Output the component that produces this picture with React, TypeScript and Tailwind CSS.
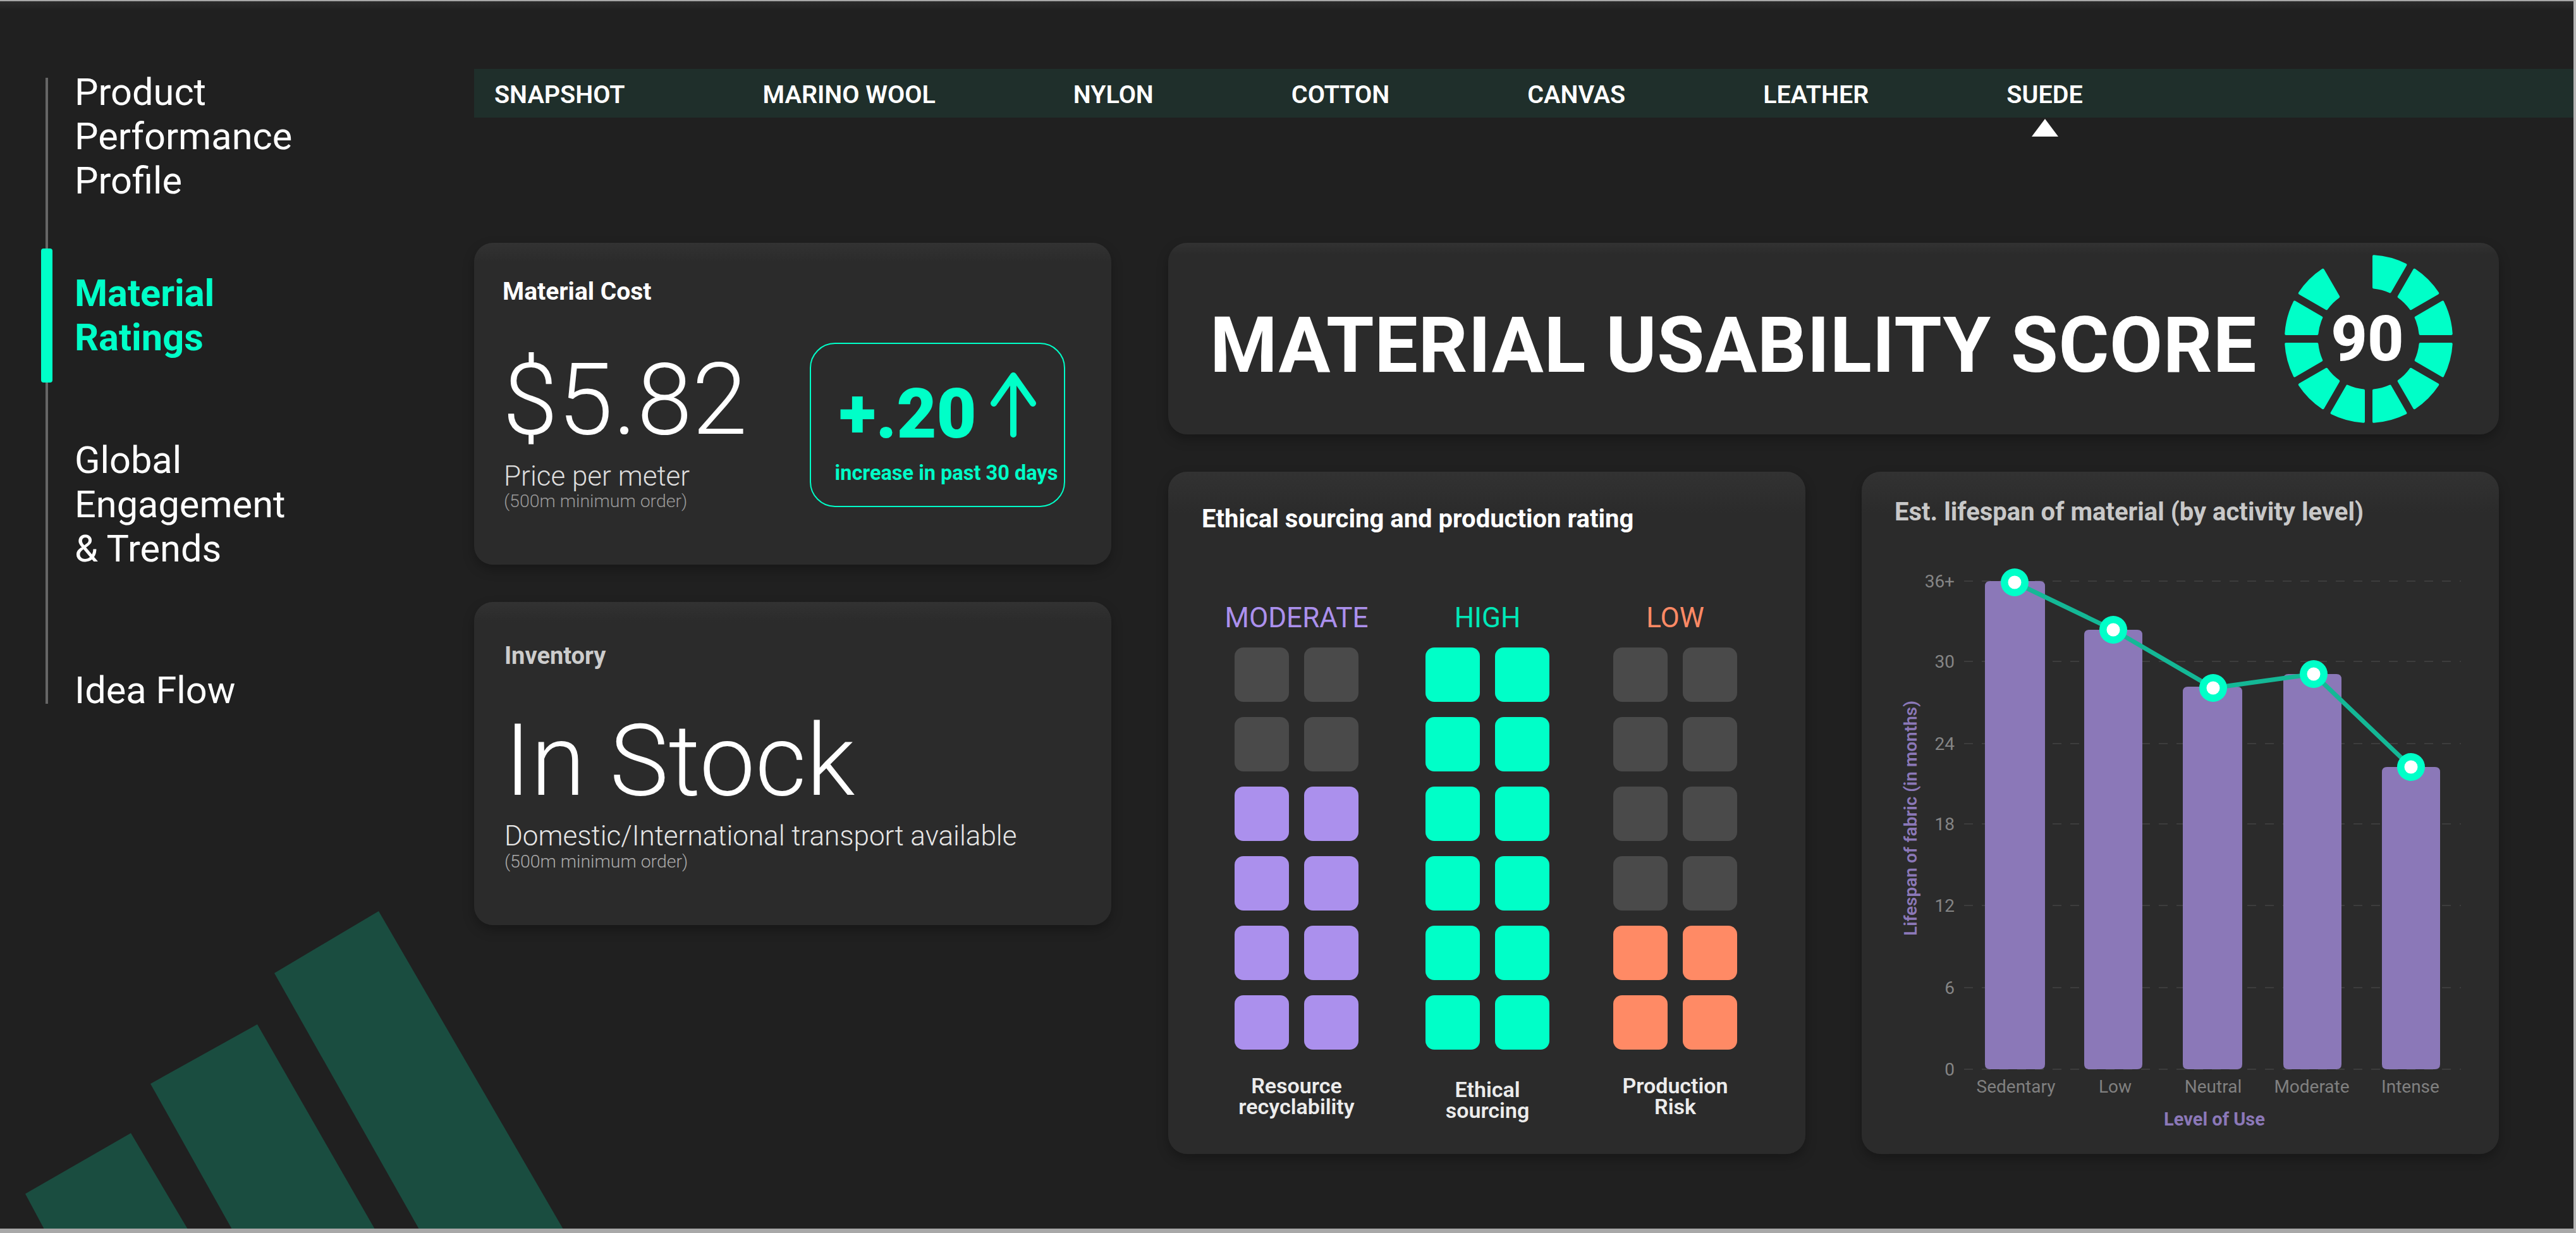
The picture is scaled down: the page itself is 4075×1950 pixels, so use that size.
import React from 'react';

const GREEN = '#00ffc8';

const ringSegments = () => {
  const cx = 140;
  const cy = 140;
  const ro = 131;
  const ri = 82;
  const gap = 8;
  const pt = (r: number, deg: number) => {
    const a = ((deg - 90) * Math.PI) / 180;
    return `${(cx + r * Math.cos(a)).toFixed(2)} ${(cy + r * Math.sin(a)).toFixed(2)}`;
  };
  const out: string[] = [];
  // last slot (11 to 12 o'clock) stays empty, score is 90
  for (let i = 0; i < 11; i++) {
    const a0 = i * 30;
    const a1 = a0 + 30;
    const oo = (Math.asin(gap / ro) * 180) / Math.PI;
    const oi = (Math.asin(gap / ri) * 180) / Math.PI;
    out.push(
      `M${pt(ro, a0 + oo)} A${ro} ${ro} 0 0 1 ${pt(ro, a1 - oo)} L${pt(ri, a1 - oi)} A${ri} ${ri} 0 0 0 ${pt(ri, a0 + oi)} Z`
    );
  }
  return out;
};

const Card: React.FC<{ className?: string; children: React.ReactNode }> = ({ className, children }) => (
  <div className={`rounded-[30px] bg-gradient-to-b from-[#323232] from-0% to-[#2b2b2b] to-[6%] shadow-[0_8px_18px_rgba(0,0,0,0.28)] ${className ?? ''}`}>
    {children}
  </div>
);

const RatingColumn: React.FC<{
  heading: string;
  headingClass: string;
  onClass: string;
  filled: number;
  label: string[];
  labelClass?: string;
  className?: string;
}> = ({ heading, headingClass, onClass, filled, label, labelClass, className }) => (
  <div className={`flex flex-col items-center w-[196px] ${className ?? ''}`}>
    <div className={`h-[52px] leading-[52px] text-[44px] whitespace-nowrap ${headingClass}`}>{heading}</div>
    <div className="mt-[21px] grid grid-cols-2 gap-x-[24px] gap-y-[24px]">
      {Array.from({ length: 12 }).map((_, i) => (
        <div key={i} className={`w-[86px] h-[86px] rounded-[14px] ${12 - i <= filled ? onClass : 'bg-[#4a4a4a]'}`} />
      ))}
    </div>
    <div className={`text-[34px] leading-[33px] font-semibold text-[#ececec] text-center whitespace-nowrap ${labelClass ?? 'mt-[41px]'}`}>
      {label.map((l) => (
        <div key={l}>{l}</div>
      ))}
    </div>
  </div>
);

const TICKS = [
  { y: 919, t: '36+' },
  { y: 1046, t: '30' },
  { y: 1176, t: '24' },
  { y: 1303, t: '18' },
  { y: 1432, t: '12' },
  { y: 1562, t: '6' },
  { y: 1691, t: '0' },
];

const BARS = [
  { x: 3139, w: 95, top: 919, px: 3186, py: 921, name: 'Sedentary', lx: 3188 },
  { x: 3296, w: 92, top: 996, px: 3342, py: 996, name: 'Low', lx: 3345 },
  { x: 3452, w: 94, top: 1086, px: 3500, py: 1088, name: 'Neutral', lx: 3500 },
  { x: 3611, w: 92, top: 1066, px: 3659, py: 1066, name: 'Moderate', lx: 3656 },
  { x: 3767, w: 92, top: 1213, px: 3813, py: 1213, name: 'Intense', lx: 3812 },
];

const LifespanChart = () => (
  <svg viewBox="2944 860 1008 965" className="w-[1008px] h-[965px]" fontFamily="Roboto, sans-serif">
    {TICKS.map((t) => (
      <g key={t.t}>
        <line x1="3106" x2="3892" y1={t.y} y2={t.y} stroke="#3d3d3d" strokeWidth="2" strokeDasharray="14 14" />
        <text x="3091" y={t.y + 10} textAnchor="end" fontSize="28" fill="#858585">
          {t.t}
        </text>
      </g>
    ))}
    {BARS.map((b) => (
      <g key={b.name}>
        <path
          d={`M${b.x} ${b.top + 8} q0 -8 8 -8 H${b.x + b.w - 8} q8 0 8 8 V1683 q0 8 -8 8 H${b.x + 8} q-8 0 -8 -8 Z`}
          fill="#8b78b8"
        />
        <text x={b.lx} y="1728" textAnchor="middle" fontSize="28" fill="#808080">
          {b.name}
        </text>
      </g>
    ))}
    <polyline points={BARS.map((b) => `${b.px},${b.py}`).join(' ')} fill="none" stroke="#14b896" strokeWidth="7" />
    {BARS.map((b) => (
      <g key={b.px}>
        <circle cx={b.px} cy={b.py} r="22" fill={GREEN} />
        <circle cx={b.px} cy={b.py} r="10.5" fill="#fff" />
      </g>
    ))}
    <text x="3502" y="1780" textAnchor="middle" fontSize="29" fontWeight="700" fill="#8b78b8">
      Level of Use
    </text>
    <text
      transform="translate(3031 1294) rotate(-90)"
      textAnchor="middle"
      fontSize="28"
      fontWeight="600"
      fill="#8b78b8"
    >
      Lifespan of fabric (in months)
    </text>
  </svg>
);

export default function App() {
  return (
    <div className="relative w-[4075px] h-[1950px] overflow-hidden bg-[#202020] border-t-[2px] border-t-[#a8a8a8] border-r-[4px] border-r-[#b5b5b5] border-b-[7px] border-b-[#a8a8a8] flex font-['Roboto',sans-serif] text-white">
      <div className="absolute left-0 top-0 w-full h-[14px] bg-gradient-to-b from-[#2c2c2c] to-transparent" />
      {/* logo in the corner */}
      <svg className="absolute left-0 top-[-2px] w-[4075px] h-[1950px]" viewBox="0 0 4075 1950">
        <polygon points="599,1441 434,1539 663,1944 891,1944" fill="#1a4d40" />
        <polygon points="407,1620 238,1714 367,1944 593,1944" fill="#1a4d40" />
        <polygon points="207,1792 40,1888 70,1944 297,1944" fill="#1a4d40" />
      </svg>

      {/* side nav */}
      <div className="relative w-[750px] shrink-0 pt-[121px] pl-[72px]">
        <div className="flow-root border-l-[4px] border-l-[#666666] h-[990px] pl-[42px] text-[59.5px] leading-[70px]">
          <div className="-mt-[12px]">
            Product
            <br />
            Performance
            <br />
            Profile
          </div>
          <div className="relative mt-[108px] font-bold text-[#00ffc8]">
            <div className="absolute left-[-53px] top-[-36px] w-[18px] h-[212px] rounded-[4px] bg-[#00ffc8]" />
            Material
            <br />
            Ratings
          </div>
          <div className="mt-[124px]">
            Global
            <br />
            Engagement
            <br />
            &amp; Trends
          </div>
          <div className="mt-[154px]">Idea Flow</div>
        </div>
      </div>

      {/* main area */}
      <div className="flex-1 pt-[107px] flex flex-col">
        <div className="h-[77px] bg-[#1f2f2b] flex items-center gap-[218px] pl-[32px] pt-[4px] text-[39.5px] font-semibold whitespace-nowrap">
          <span>SNAPSHOT</span>
          <span>MARINO WOOL</span>
          <span>NYLON</span>
          <span>COTTON</span>
          <span>CANVAS</span>
          <span>LEATHER</span>
          <span className="relative">
            SUEDE
            <span className="absolute left-1/2 -translate-x-1/2 top-[68px] w-0 h-0 border-l-[21px] border-r-[21px] border-b-[28px] border-l-transparent border-r-transparent border-b-white" />
          </span>
        </div>

        <div className="mt-[198px] flex gap-[90px]">
          {/* left column */}
          <div className="w-[1008px] flex flex-col gap-[59px]">
            <Card className="h-[509px] pt-[55px] px-[45px]">
              <div className="text-[39px] font-bold leading-[44px]">Material Cost</div>
              <div className="flex mt-[59px]">
                <div className="w-[486px] pl-[2px] font-light">
                  <div className="text-[157.5px] leading-[170px] -ml-[2px] mt-[5px]">$5.82</div>
                  <div className="text-[44px] leading-[48px] text-[#dddddd] mt-[12px]">Price per meter</div>
                  <div className="text-[28.5px] leading-[32px] text-[#9a9a9a]">(500m minimum order)</div>
                </div>
                <div className="w-[404px] h-[260px] rounded-[40px] border-[2px] border-[#00ffc8] flex flex-col items-center">
                  <div className="flex items-start gap-[22px] mt-[48px]">
                    <span className="text-[109px] leading-[126px] font-black text-[#00ffc8]">+.20</span>
                    <svg className="-mt-[4px]" width="72" height="104" viewBox="0 0 72 104" fill="none" stroke="#00ffc8" strokeWidth="10" strokeLinecap="round" strokeLinejoin="round">
                      <path d="M36 99 V6 M5 50 L36 6 L67 50" />
                    </svg>
                  </div>
                  <div className="ml-[28px] text-[32.5px] leading-[34px] font-bold text-[#00ffc8] mt-[13px] whitespace-nowrap">increase in past 30 days</div>
                </div>
              </div>
            </Card>
            <Card className="h-[511px] pt-[63px] px-[48px]">
              <div className="text-[38px] font-bold leading-[44px] text-[#cccccc]">Inventory</div>
              <div className="text-[157px] leading-[180px] font-light mt-[54px]">In Stock</div>
              <div className="text-[44px] leading-[48px] font-light text-[#e6e6e6] mt-[5px]">Domestic/International transport available</div>
              <div className="text-[28.5px] leading-[32px] font-light text-[#aaaaaa] mt-[1px]">(500m minimum order)</div>
            </Card>
          </div>

          {/* right column */}
          <div className="w-[2105px] flex flex-col gap-[59px]">
            <Card className="h-[303px] pl-[66px] flex items-center">
              <div className="text-[122px] font-bold leading-none tracking-[0.7px] whitespace-nowrap mt-[22px]">MATERIAL USABILITY SCORE</div>
              <div className="relative ml-[37px] w-[280px] h-[280px] shrink-0 flex items-center justify-center">
                <svg className="absolute inset-0" viewBox="0 0 280 280" fill={GREEN} stroke={GREEN} strokeWidth="4" strokeLinejoin="round">
                  {ringSegments().map((d) => (
                    <path key={d} d={d} />
                  ))}
                </svg>
                <span className="relative text-[100px] font-extrabold leading-none -ml-[4px]">90</span>
              </div>
            </Card>
            <div className="flex gap-[89px]">
              <Card className="w-[1008px] h-[1079px] pt-[53px] pl-[53px]">
                <div className="text-[40px] font-bold leading-[44px] whitespace-nowrap">Ethical sourcing and production rating</div>
                <div className="flex mt-[108px] ml-[52px] gap-[106px]">
                  <RatingColumn
                    heading="MODERATE"
                    headingClass="text-[#ab90ed]"
                    onClass="bg-[#ab90ed]"
                    filled={8}
                    label={['Resource', 'recyclability']}
                  />
                  <RatingColumn
                    heading="HIGH"
                    headingClass="text-[#00e8b8]"
                    onClass="bg-[#00ffc8]"
                    filled={12}
                    label={['Ethical', 'sourcing']}
                    labelClass="mt-[47px]"
                  />
                  <RatingColumn
                    heading="LOW"
                    headingClass="text-[#ff8a65]"
                    onClass="bg-[#ff8a65]"
                    filled={4}
                    label={['Production', 'Risk']}
                    className="-ml-[5px]"
                  />
                </div>
              </Card>
              <Card className="w-[1008px] h-[1079px] pt-[42px]">
                <div className="pl-[52px] text-[40px] font-bold leading-[44px] text-[#c8c8c8] whitespace-nowrap">Est. lifespan of material (by activity level)</div>
                <div className="mt-[28px]">
                  <LifespanChart />
                </div>
              </Card>
            </div>
          </div>
        </div>
      </div>
    </div>
  );
}
